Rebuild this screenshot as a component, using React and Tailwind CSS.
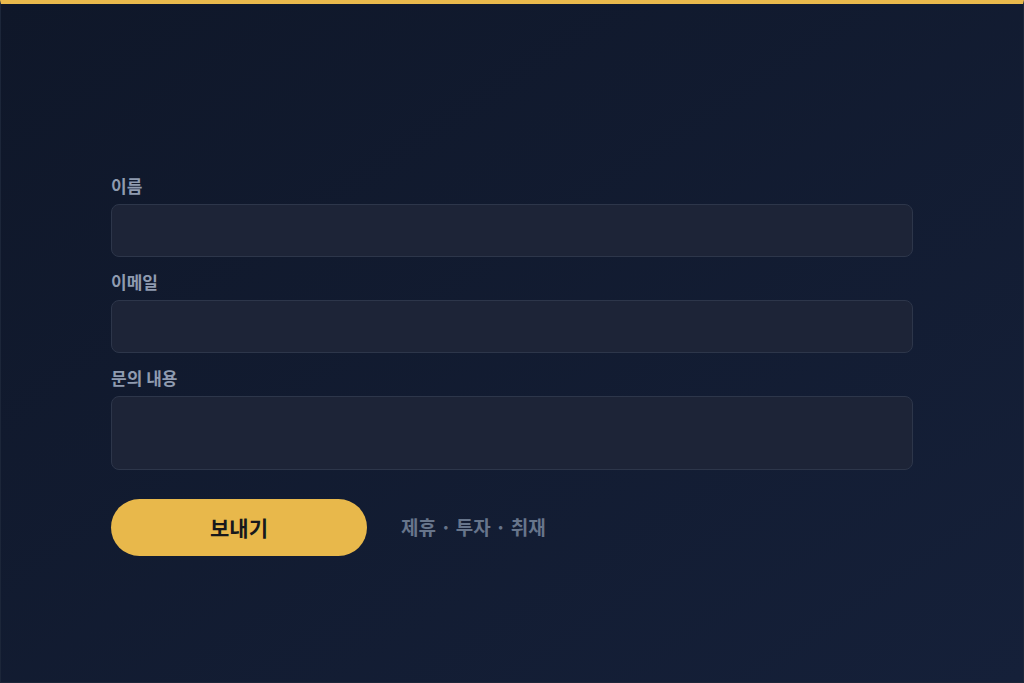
import React from 'react';

export default function App() {
  const fields = [
    { label: '이름', type: 'input' },
    { label: '이메일', type: 'input' },
    { label: '문의 내용', type: 'textarea' },
  ];

  return (
    <div
      className="h-[683px] w-full border-t-4 border-t-[#e9b94c] border-x border-b border-x-[#1c2639] border-b-[#1c2639] bg-gradient-to-br from-[#0f1729] to-[#152039] overflow-hidden"
      style={{ fontFamily: '"Noto Sans CJK KR", "Noto Sans", sans-serif' }}
    >
      <div className="mx-auto w-[802px] pt-[170px]">
        <form className="flex flex-col" onSubmit={(e) => e.preventDefault()}>
          {fields.map((f, i) => (
            <div key={f.label} className={`flex flex-col gap-[6px] ${i > 0 ? 'mt-[13px]' : ''}`}>
              <label className="text-[17px] font-semibold leading-6 text-[#8f9bb0]">{f.label}</label>
              {f.type === 'input' ? (
                <input
                  type="text"
                  className="h-[53px] w-full rounded-lg border border-[#2d364a] bg-[#1d2437] px-4 text-white outline-none"
                />
              ) : (
                <textarea
                  className="h-[74px] w-full resize-none rounded-lg border border-[#2d364a] bg-[#1d2437] px-4 py-3 text-white outline-none"
                />
              )}
            </div>
          ))}

          <div className="mt-[29px] flex items-center gap-[34px]">
            <button
              type="submit"
              className="h-[57px] w-[256px] rounded-full bg-[#e8b84b] text-[21px] font-bold text-[#17181c]"
            >
              보내기
            </button>
            <span className="text-[19px] font-bold text-[#67758b]">제휴 · 투자 · 취재</span>
          </div>
        </form>
      </div>
    </div>
  );
}
